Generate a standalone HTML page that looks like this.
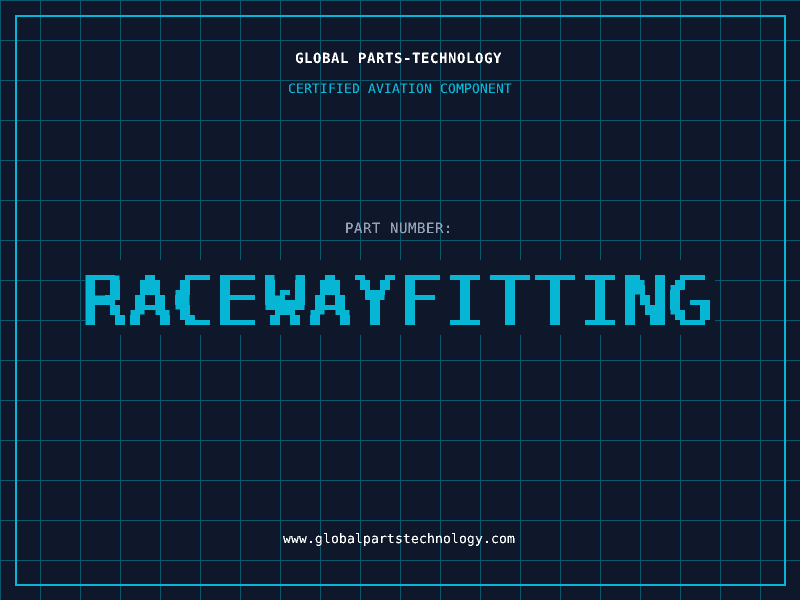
<!DOCTYPE html>
<html><head><meta charset="utf-8"><style>
html,body{margin:0;padding:0;width:800px;height:600px;overflow:hidden;background:#0f172a}
svg{display:block}
text{font-family:"DejaVu Sans Mono",monospace;text-rendering:geometricPrecision}
</style></head><body>
<svg width="800" height="600" viewBox="0 0 800 600" xmlns="http://www.w3.org/2000/svg">
<defs>
<pattern id="g" width="40" height="40" patternUnits="userSpaceOnUse">
<rect x="0" y="0" width="40" height="1" fill="#0b576e"/>
<rect x="0" y="0" width="1" height="40" fill="#0b576e"/>
</pattern>
<filter id="th" filterUnits="userSpaceOnUse" x="0" y="0" width="800" height="600" color-interpolation-filters="sRGB">
<feComponentTransfer><feFuncA type="discrete" tableValues="0 1"/></feComponentTransfer>
</filter>
<filter id="th2" filterUnits="userSpaceOnUse" x="0" y="0" width="800" height="600" color-interpolation-filters="sRGB">
<feComponentTransfer><feFuncA type="discrete" tableValues="0 1 1"/></feComponentTransfer>
</filter>
<filter id="px" filterUnits="userSpaceOnUse" primitiveUnits="userSpaceOnUse" x="0" y="0" width="800" height="600" color-interpolation-filters="sRGB">
<feMorphology in="SourceGraphic" operator="erode" radius="1 0" result="thin"/>
<feFlood x="2" y="2" width="1" height="1" flood-color="#000" result="f"/>
<feComposite in="f" width="5" height="5" result="c"/>
<feTile in="c" result="dots"/>
<feComposite in="thin" in2="dots" operator="in" result="s"/>
<feComponentTransfer in="s" result="t"><feFuncA type="discrete" tableValues="0 1"/></feComponentTransfer>
<feMorphology in="t" operator="dilate" radius="2" result="d"/>
<feOffset in="d" dx="5" dy="0" result="o"/>
<feMerge result="m"><feMergeNode in="d"/><feMergeNode in="o"/></feMerge>
<feMorphology in="m" operator="dilate" radius="2" result="m2"/>
<feMorphology in="m2" operator="erode" radius="2"/>
</filter>
</defs>
<rect width="800" height="600" fill="#0f172a"/>
<rect width="800" height="600" fill="url(#g)"/>
<rect x="16" y="16" width="769" height="569" fill="none" stroke="#06b6d4" stroke-width="2"/>
<rect x="85" y="260" width="630" height="75" fill="#0f172a"/>
<text y="63" font-size="14" font-weight="700" fill="#fff" filter="url(#th)" x="295 304 313 322 331 340 349 358 367 376 385 394 403 412 421 430 439 448 457 466 475 484 493">GLOBAL PARTS-TECHNOLOGY</text>
<g filter="url(#th2)">
<text y="93" font-size="13" fill="#06b6d4" x="288 296 304 312 320 328 336 344 352 360 368 376 384 392 400 408 416 424 432 440 448 456 464 472 480 488 496 504">CERTIFIED AVIATION COMPONENT</text>
<text y="233" font-size="14" fill="#94a3b8" x="345 354 363 372 381 390 399 408 417 426 435 444">PART NUMBER:</text>
<text y="543" font-size="13" fill="#fff" x="283 291 299 307 315 323 331 339 347 355 363 371 379 387 395 403 411 419 427 435 443 451 459 467 475 483 491 499 507">www.globalpartstechnology.com</text>
</g>
<text y="325" font-size="70" fill="#06b6d4" filter="url(#px)" text-anchor="middle" x="102.5 147.5 192.5 235 282.5 327.5 372.5 417.5 462.5 507.5 552.5 597.5 642.5 687.5">RACEWAYFITTING</text>
</svg>
</body></html>
